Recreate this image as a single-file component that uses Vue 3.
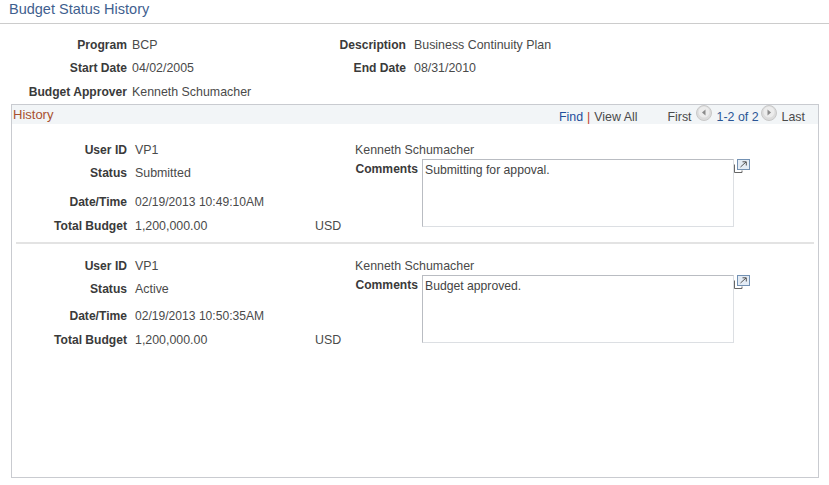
<script setup>
const top = [
  { l: 'Program', v: 'BCP', l2: 'Description', v2: 'Business Continuity Plan' },
  { l: 'Start Date', v: '04/02/2005', l2: 'End Date', v2: '08/31/2010' },
  { l: 'Budget Approver', v: 'Kenneth Schumacher' }
]
const entries = [
  { cls: 'one', status: 'Submitted', time: '02/19/2013 10:49:10AM', comment: 'Submitting for appoval.' },
  { cls: 'two', status: 'Active', time: '02/19/2013 10:50:35AM', comment: 'Budget approved.' }
]
</script>

<template>
  <div class="page">
    <header class="title"><h1>Budget Status History</h1></header>
    <section class="summary">
      <div v-for="r in top" :key="r.l" class="sum-row">
        <span class="lab sl">{{ r.l }}</span>
        <span class="val sv">{{ r.v }}</span>
        <template v-if="r.l2">
          <span class="lab sl2">{{ r.l2 }}</span>
          <span class="val">{{ r.v2 }}</span>
        </template>
      </div>
    </section>
    <section class="panel">
      <div class="bar">
        <span class="hist">History</span>
        <nav class="nav">
          <a class="link">Find</a><i class="pipe">|</i><span class="val va">View All</span>
          <span class="val firstlink">First</span>
          <svg class="arrow prev" width="16" height="16" viewBox="0 0 16 16"><circle cx="8" cy="8" r="7.5" fill="#dcdcdc" stroke="#c8c8c8"/><circle cx="8" cy="7" r="5.5" fill="#ececec"/><path d="M9.5 4.5v6L6 7.5z" fill="#8a8a8a"/></svg>
          <span class="count">1-2 of 2</span>
          <svg class="arrow next" width="16" height="16" viewBox="0 0 16 16"><circle cx="8" cy="8" r="7.5" fill="#dcdcdc" stroke="#c8c8c8"/><circle cx="8" cy="7" r="5.5" fill="#ececec"/><path d="M6.5 4.5v6L10 7.5z" fill="#8a8a8a"/></svg>
          <span class="val last">Last</span>
        </nav>
      </div>
      <div v-for="e in entries" :key="e.time" class="entry" :class="e.cls">
        <div class="left">
          <span class="lab">User ID</span><span class="val">VP1</span><span></span>
          <span class="lab">Status</span><span class="val">{{ e.status }}</span><span></span>
          <span class="lab">Date/Time</span><span class="val time">{{ e.time }}</span><span></span>
          <span class="lab">Total Budget</span><span class="val">1,200,000.00</span><span class="val">USD</span>
        </div>
        <div class="right">
          <div class="val name">Kenneth Schumacher</div>
          <div class="cm">
            <span class="lab cl">Comments</span>
            <div class="box">{{ e.comment }}</div>
            <svg class="exp" width="16" height="14" viewBox="0 0 16 14"><path d="M.5 5.5v8h7.5v-2" fill="none" stroke="#666"/><rect x="3.5" y=".5" width="12" height="10" fill="#e4ecf5" stroke="#7391b3"/><path d="M6.5 8L12 3M8.5 2.8H12.3V6.5" fill="none" stroke="#555"/></svg>
          </div>
        </div>
      </div>
    </section>
  </div>
</template>

<style>
html, body { margin: 0; background: #fff; }
</style>

<style scoped>
.page { width: 829px; height: 485px; overflow: hidden; font-family: "Liberation Sans", Arial, sans-serif; font-size: 12.4px; color: #444; box-sizing: border-box; }
.title { height: 23px; border-bottom: 1px solid #ccc; padding-left: 9px; }
h1 { margin: 0; font-size: 14.5px; font-weight: normal; color: #3f5f8f; line-height: 19px; }
.lab { font-weight: bold; font-size: 12.1px; color: #3a3a3a; text-align: right; }
.val { color: #4a4a4a; }
.time { font-size: 12.1px; }
.summary { height: 80px; padding-top: 9px; box-sizing: border-box; }
.sum-row { display: flex; height: 23.5px; align-items: center; }
.sl { width: 127px; }
.sv { margin-left: 5px; flex: 0 0 157px; }
.sl2 { width: 117px; margin-right: 8px; }
.panel { margin: 0 11px; width: 808px; height: 374px; box-sizing: border-box; border: 1px solid #c9cbd0; }
.bar { height: 19px; background: #f2f5f7; display: flex; justify-content: space-between; align-items: center; padding-left: 1px; }
.hist { color: #a8502f; font-size: 13px; }
.nav { display: flex; align-items: center; padding-right: 13px; height: 19px; padding-top: 4px; box-sizing: border-box; }
.link { color: #1f4e9c; }
.pipe { color: #c0392b; font-style: normal; margin: 0 4px; }
.firstlink { margin-left: 30px; }
.arrow { margin-top: -7px; margin-right: 5px; }
.prev { margin-left: 4px; }
.next { margin-left: 2px; }
.count { color: #2a5595; }
.entry { display: flex; position: relative; }
.entry.one { padding-top: 15px; height: 120px; box-sizing: border-box; }
.entry.two { padding-top: 12px; }
.entry.one::after { content: ""; position: absolute; left: 4px; right: 4px; bottom: 0; height: 2px; background: #e3e3e3; }
.left { width: 343px; flex: none; display: grid; grid-template-columns: 115px 188px 40px; align-content: start; align-items: center; }
.left .val:nth-child(3n+2) { padding-left: 8px; }
.one .left { grid-template-rows: 22px 24px 34px 14px; }
.two .left { grid-template-rows: 20px 26px 28px 20px; }
.right { display: flex; flex-direction: column; }
.name { height: 20px; line-height: 22px; }
.two .name { height: 19px; line-height: 20px; }
.cm { display: flex; align-items: flex-start; }
.cl { width: 63px; margin-right: 4px; line-height: 20px; }
.box { width: 312px; height: 68px; box-sizing: border-box; border: 1px solid #b9bcc2; border-right-color: #dcdfe3; border-bottom-color: #dcdfe3; padding: 3px 2px; line-height: 14px; font-size: 12.2px; }
.exp { display: block; }
</style>
